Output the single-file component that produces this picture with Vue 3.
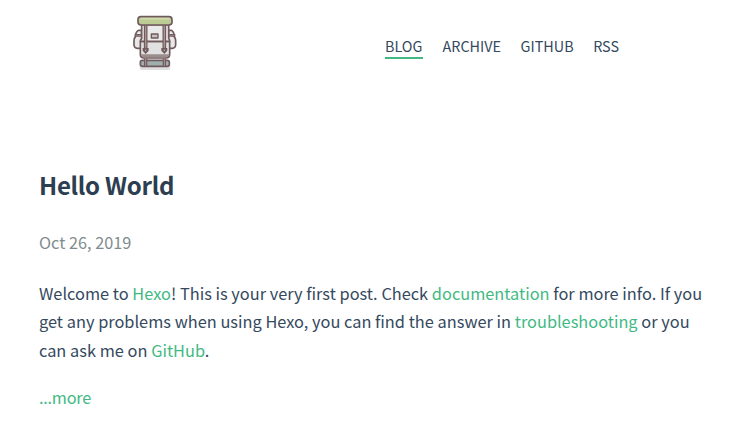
<script setup>
const links = ['BLOG', 'ARCHIVE', 'GITHUB', 'RSS']
</script>

<template>
  <div class="page">
    <header class="header">
      <a class="logo" href="#" aria-label="Home">
        <svg width="60" height="70" viewBox="0 0 180 210">
          <path d="M44 170H136V180Q136 186 130 186H50Q44 186 44 180Z" fill="#dfdfdf" />
          <g stroke="#705a5e" stroke-width="5" stroke-linejoin="round">
            <rect x="46" y="157" width="87" height="18" rx="6" fill="#9eafae" />
            <path d="M50 67H41Q32 70 31 87Q27 90 27 98V111Q28 121 37 121H50Z" fill="#e8e8e8" />
            <path d="M130 67H139Q147 70 148 87Q152 90 152 98V111Q151 121 142 121H130Z" fill="#e8e8e8" />
            <path d="M46 100H134V139Q134 150 123 150H57Q46 150 46 139Z" fill="#e1e1e1" />
            <path d="M50 50H131V92Q134 94 134 100H46Q46 94 50 92Z" fill="#eaeaea" />
            <rect x="39" y="26" width="102" height="25" rx="9" fill="#bdcb94" />
            <rect x="79" y="78" width="20" height="12" fill="#c4c1c1" stroke-width="4" />
          </g>
          <path d="M48 139H132Q131 148 123 148H57Q49 148 48 139Z" fill="#9b8d8b" />
          <path d="M46 32H134" stroke="#d1dbad" stroke-width="5" />
          <g fill="none" stroke="#705a5e">
            <path d="M62 52V120M118 52V120" stroke-width="11" />
            <path d="M62 53V119M118 53V119" stroke="#a99591" stroke-width="4" />
            <path d="M62 152V176M118 152V176" stroke-width="10" />
            <path d="M62 153V174M118 153V174" stroke="#a99591" stroke-width="3" />
            <path d="M29 82H49M131 82H151" stroke-width="8" />
            <path d="M32 82H48M132 82H148" stroke="#a99591" stroke-width="2" />
          </g>
          <path d="M53 120H71V128L62 138L53 128ZM109 120H127V128L118 138L109 128Z" fill="#705a5e" />
          <path d="M59 125H65L62 130ZM115 125H121L118 130Z" fill="#c9bfbd" />
        </svg>
      </a>
      <nav class="nav">
        <a v-for="(link, i) in links" :key="link" href="#" :class="{ current: i === 0 }">{{ link }}</a>
      </nav>
    </header>
    <main class="post">
      <h1>Hello World</h1>
      <p class="date">Oct 26, 2019</p>
      <p class="excerpt">Welcome to <a href="#">Hexo</a>! This is your very first post. Check <a href="#">documentation</a> for more info. If you get any problems when using Hexo, you can find the answer in <a href="#">troubleshooting</a> or you can ask me on <a href="#">GitHub</a>.</p>
      <a class="more" href="#">...more</a>
    </main>
  </div>
</template>

<style>
body {
  margin: 0;
  background: #fff;
}
</style>

<style scoped>
.page {
  height: 434px;
  overflow: hidden;
  font-family: "Noto Sans CJK SC", "Open Sans", sans-serif;
  font-size: 16.3px;
  color: #34495e;
}
a {
  color: #42b983;
  text-decoration: none;
}
.header {
  display: flex;
  align-items: flex-start;
  height: 154px;
  padding: 8px 0 0 125px;
  box-sizing: border-box;
}
.logo {
  display: flex;
  width: 60px;
}
.nav {
  display: flex;
  gap: 19.5px;
  padding: 27px 0 0 200px;
}
.nav a {
  font-size: 14.4px;
  line-height: 22px;
  color: #34495e;
  border-bottom: 2px solid transparent;
}
.nav .current {
  padding-right: 0.6px;
  border-color: #42b983;
}
.post {
  padding: 11px 30px 0 39px;
}
h1 {
  margin: 0;
  font-size: 24px;
  line-height: 40px;
  font-weight: 600;
  letter-spacing: -0.28px;
  color: #2c3e50;
}
p {
  margin: 0;
}
.date {
  margin-top: 23px;
  line-height: 28px;
  color: #7f8c8d;
}
.excerpt {
  margin-top: 23px;
  font-size: 16.35px;
  line-height: 28.4px;
  word-spacing: 0.06px;
}
.more {
  display: block;
  margin-top: 19px;
  line-height: 28px;
  letter-spacing: -0.25px;
}
</style>
